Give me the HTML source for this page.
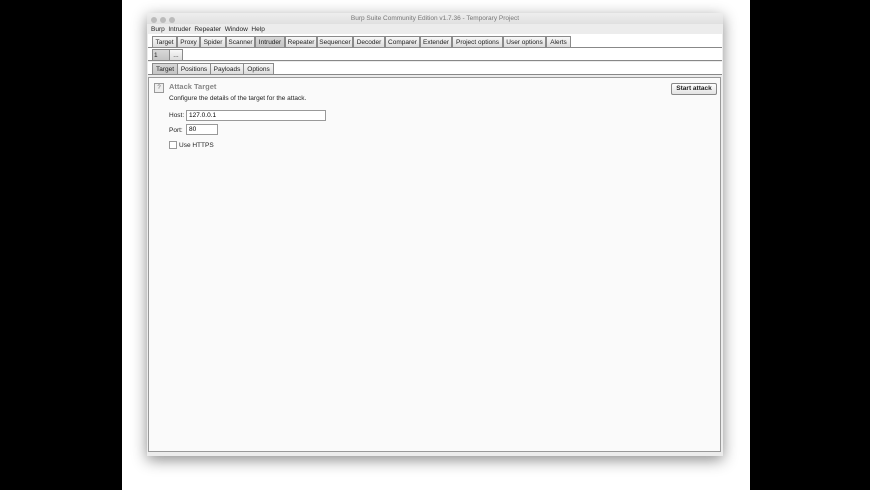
<html><head><style>
body{margin:0;width:870px;height:490px;background:#fff;position:relative;overflow:hidden;font-family:"Liberation Sans",sans-serif;font-size:7px;color:#222}
.blk{position:absolute;top:0;height:490px;background:#000}
.win{position:absolute;left:147px;top:13px;width:576px;height:443px;background:#ececec;box-shadow:0 4px 14px rgba(0,0,0,.45)}
.a{position:absolute}
.tab{position:absolute;height:10px;border:1px solid #8a8a8a;background:linear-gradient(#f8f8f8,#dcdcdc);font-size:6.5px;line-height:11px;text-align:center;box-sizing:content-box}
.sel{background:linear-gradient(#d8d8d8,#c4c4c4)}
.dot{position:absolute;top:4px;width:6px;height:6px;border-radius:50%;background:#bbb}
input{position:absolute;box-sizing:border-box;border:1px solid #999;background:#fff;height:11px;font-size:6.5px;padding:0 2px;font-family:"Liberation Sans",sans-serif}
</style></head><body>
<div class="blk" style="left:0;width:122px"></div>
<div class="blk" style="left:750px;width:120px"></div>
<div class="win">
 <div class="a" style="left:0;top:0;width:576px;height:11px;background:linear-gradient(#eee,#e0e0e0)"></div>
 <div class="dot" style="left:4px"></div><div class="dot" style="left:13px"></div><div class="dot" style="left:22px"></div>
 <div class="a" style="left:0;width:576px;top:2px;text-align:center;color:#777;font-size:6.5px">Burp Suite Community Edition v1.7.36 - Temporary Project</div>
 <div class="a" style="left:4px;top:13px;font-size:6.5px">Burp&nbsp; Intruder&nbsp; Repeater&nbsp; Window&nbsp; Help</div>
 <div class="a" style="left:1px;top:21px;width:574px;height:13px;background:#fff;border-bottom:1px solid #888"></div>
 <div class="a" style="left:1px;top:35px;width:574px;height:12px;background:#fff;border-bottom:1px solid #888"></div>
 <div class="a" style="left:1px;top:49px;width:574px;height:12px;background:#fff;border-bottom:1px solid #888"></div>
</div>
<div class="tab" style="left:152px;top:36px;width:23px">Target</div>
<div class="tab" style="left:177px;top:36px;width:21px">Proxy</div>
<div class="tab" style="left:200px;top:36px;width:24px">Spider</div>
<div class="tab" style="left:226px;top:36px;width:27px">Scanner</div>
<div class="tab sel" style="left:255px;top:36px;width:28px">Intruder</div>
<div class="tab" style="left:285px;top:36px;width:30px">Repeater</div>
<div class="tab" style="left:317px;top:36px;width:34px">Sequencer</div>
<div class="tab" style="left:353px;top:36px;width:30px">Decoder</div>
<div class="tab" style="left:385px;top:36px;width:33px">Comparer</div>
<div class="tab" style="left:420px;top:36px;width:30px">Extender</div>
<div class="tab" style="left:452px;top:36px;width:49px">Project options</div>
<div class="tab" style="left:503px;top:36px;width:41px">User options</div>
<div class="tab" style="left:546px;top:36px;width:23px">Alerts</div>
<div class="tab sel" style="left:152px;top:49px;width:15px;text-align:left;padding-left:1px">1</div>
<div class="tab" style="left:169px;top:49px;width:12px">...</div>
<div class="tab sel" style="left:152px;top:63px;width:24px">Target</div>
<div class="tab" style="left:177px;top:63px;width:32px">Positions</div>
<div class="tab" style="left:210px;top:63px;width:32px">Payloads</div>
<div class="tab" style="left:243px;top:63px;width:29px">Options</div>
<div class="a" style="left:148px;top:77px;width:573px;height:375px;background:#fafafa;border:1px solid #999;box-sizing:border-box"></div>
<div class="a" style="left:154px;top:83px;width:8px;height:8px;border:1px solid #999;background:#eee;font-size:6px;line-height:8px;text-align:center;color:#666">?</div>
<div class="a" style="left:169px;top:82px;font-size:7.5px;font-weight:bold;color:#888">Attack Target</div>
<div class="a" style="left:169px;top:95px;font-size:6.5px">Configure the details of the target for the attack.</div>
<div class="a" style="left:169px;top:112px;font-size:6.5px">Host:</div>
<input style="left:186px;top:110px;width:140px" value="127.0.0.1">
<div class="a" style="left:169px;top:127px;font-size:6.5px">Port:</div>
<input style="left:186px;top:124px;width:32px" value="80">
<div class="a" style="left:169px;top:141px;width:6px;height:6px;border:1px solid #999;background:#fff"></div>
<div class="a" style="left:179px;top:142px;font-size:6.5px">Use HTTPS</div>
<div class="a" style="left:671px;top:83px;width:44px;height:10px;border:1px solid #888;border-radius:2px;background:linear-gradient(#fff,#e2e2e2);font-size:6.5px;font-weight:bold;line-height:10px;text-align:center">Start attack</div>
</body></html>
